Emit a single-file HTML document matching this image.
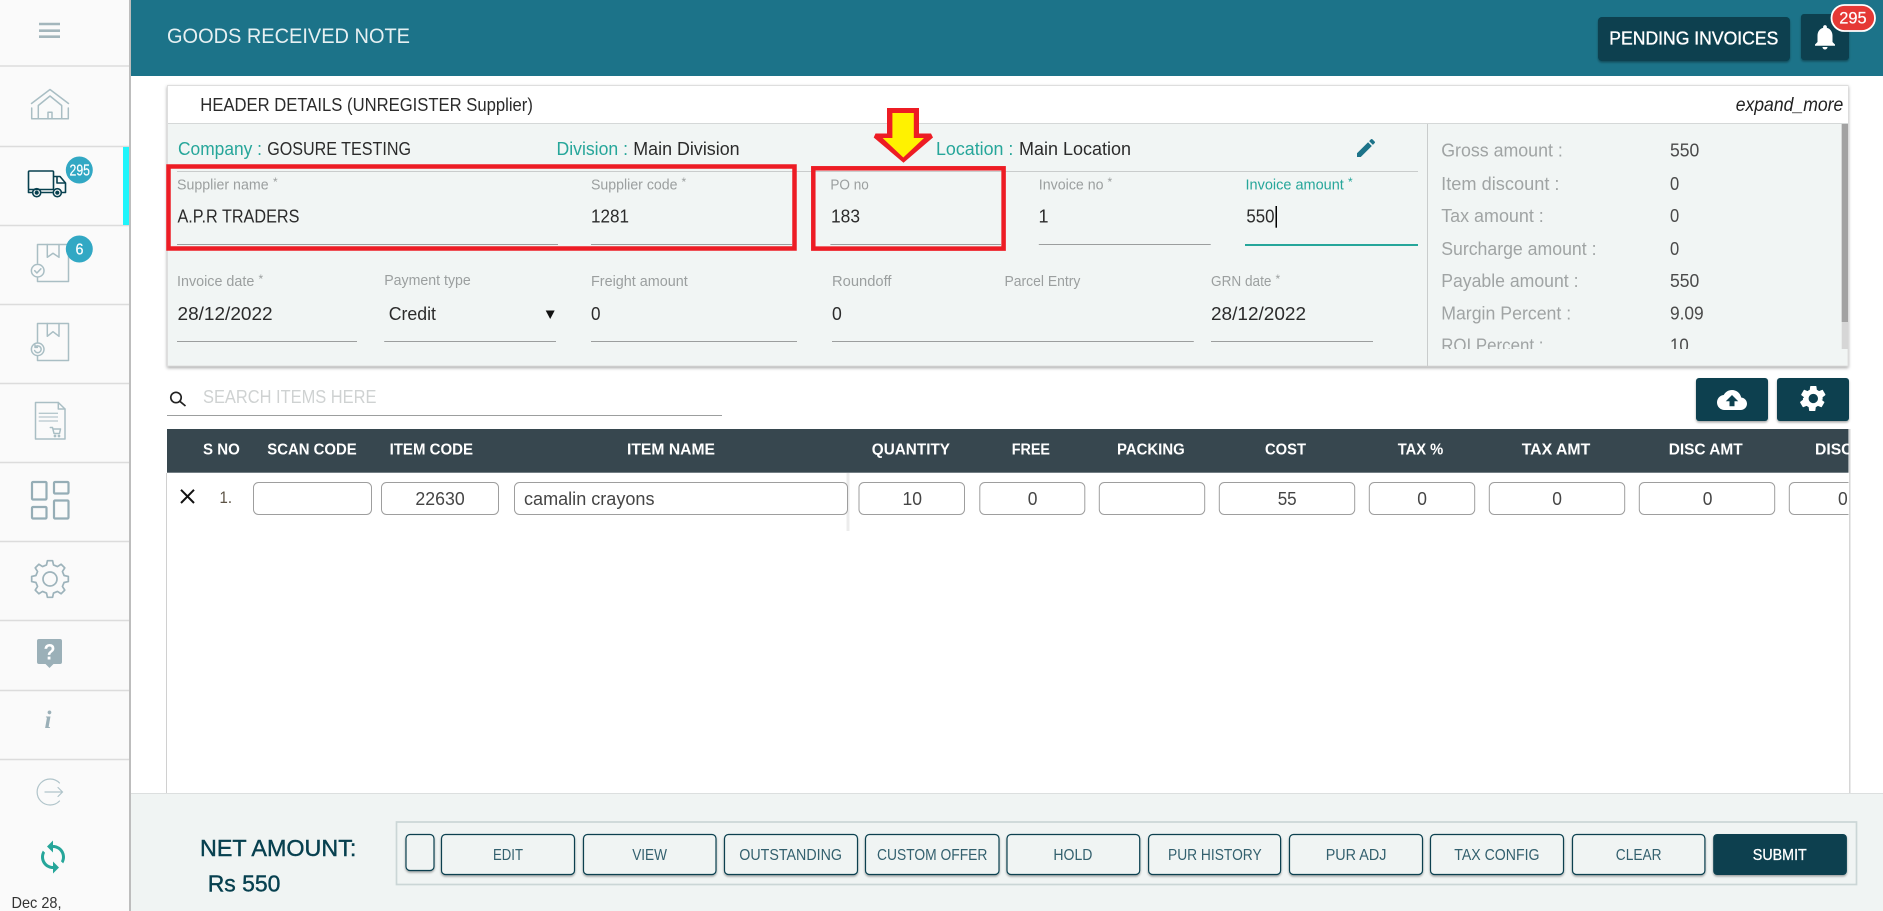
<!DOCTYPE html>
<html lang="en">
<head>
<meta charset="utf-8">
<title>Goods Received Note</title>
<style>
html,body{margin:0;padding:0;background:#fff;width:1883px;height:911px;overflow:hidden}
svg{display:block}
text{font-family:"Liberation Sans",Arial,sans-serif;white-space:pre}
.lab{font-size:15px;fill:#9b9f9f}
.star{font-size:12px;fill:#9b9f9f}
.val{font-size:18px;fill:#2b2b2b}
.top{font-size:18px;fill:#2b2b2b}
.sl{font-size:18px;fill:#a0a4a4}
.sv{font-size:18px;fill:#4a4a4a}
.th{font-size:16px;font-weight:700;fill:#fff}
.td{font-size:18px;fill:#454545}
.btn{font-size:15.500px;fill:#33606e}
.teal{fill:#26a69a}
.ln{stroke:#9c9e9e;stroke-width:1}
.cell{fill:#fff;stroke:#9e9e9e;stroke-width:1}
.fb{fill:#f0f4f3;stroke:#07404f;stroke-width:1.200}
.sep{stroke:#dcdcdc;stroke-width:1.500}
.ic{fill:none;stroke:#a9bec4;stroke-width:1.500;stroke-linejoin:round;stroke-linecap:round}
.ic2{fill:none;stroke:#95adb6;stroke-width:2.200;stroke-linejoin:round}
</style>
</head>
<body>
<svg xmlns="http://www.w3.org/2000/svg" width="1883" height="911" viewBox="0 0 1883 911">
<defs>
<filter id="sh" x="-5%" y="-5%" width="110%" height="115%"><feDropShadow dx="0" dy="1.500" stdDeviation="1.500" flood-color="#000" flood-opacity=".35"/></filter>
<filter id="sb" x="-10%" y="-10%" width="120%" height="130%"><feDropShadow dx="0" dy="1.500" stdDeviation="1" flood-color="#000" flood-opacity=".35"/></filter>
<clipPath id="roi"><rect x="1430" y="124" width="410" height="225"/></clipPath>
<clipPath id="tb"><rect x="167" y="429" width="1681.500" height="120"/></clipPath>
</defs>

<!-- Sidebar -->
<rect x="0" y="0" width="129" height="911" fill="#fafafa"/>
<rect x="129" y="0" width="2" height="911" fill="#bdbdbd"/>
<g class="sep">
<line x1="0" x2="129" y1="66" y2="66"/><line x1="0" x2="129" y1="146.500" y2="146.500"/><line x1="0" x2="129" y1="225.500" y2="225.500"/>
<line x1="0" x2="129" y1="304.500" y2="304.500"/><line x1="0" x2="129" y1="383.500" y2="383.500"/><line x1="0" x2="129" y1="462.500" y2="462.500"/>
<line x1="0" x2="129" y1="541.500" y2="541.500"/><line x1="0" x2="129" y1="620.500" y2="620.500"/><line x1="0" x2="129" y1="690.500" y2="690.500"/><line x1="0" x2="129" y1="759.500" y2="759.500"/>
</g>
<rect x="123" y="147" width="6" height="78" fill="#1ff5fb"/>

<!-- hamburger -->
<g stroke="#a3b6bc" stroke-width="2.600"><line x1="39" x2="60" y1="24" y2="24"/><line x1="39" x2="60" y1="30.700" y2="30.700"/><line x1="39" x2="60" y1="36.700" y2="36.700"/></g>

<!-- home -->
<g class="ic">
<path d="M31.500 103.500 50 89.500 68.500 103.500"/>
<path d="M38.300 118.500V105.500L50 96 61.700 105.500V118.500"/>
<path d="M31.700 108V118.700H68.300V108"/>
<path d="M48 118.500V112.300H52V118.500"/>
</g>

<!-- truck -->
<g fill="none" stroke="#07404f" stroke-width="1.600" stroke-linejoin="round">
<rect x="28.500" y="171" width="25" height="18.500" rx="1"/>
<path d="M53.500 176.500H60L65.500 183V192.500H62"/>
<path d="M57 177V183H65"/>
<path d="M28.500 189.500V192.500H32M41.500 192.500H52.500"/>
<circle cx="36.700" cy="192.700" r="4"/><circle cx="57.300" cy="192.700" r="4"/>
<circle cx="36.700" cy="192.700" r="1.300" fill="#07404f"/><circle cx="57.300" cy="192.700" r="1.300" fill="#07404f"/>
</g>
<circle cx="79.300" cy="170" r="13.500" fill="#32a8c4"/>
<text x="69.500" y="175.500" font-size="16" fill="#fff" stroke="#fff" stroke-width=".2" textLength="20.500" lengthAdjust="spacingAndGlyphs">295</text>

<!-- box check -->
<g class="ic" stroke-width="1.300">
<path d="M37.500 263V244.500H68.500V281.500H37.500V278"/>
<path d="M47.300 244.500V257.300L53 253.300 59 257.300V244.500"/>
<circle cx="37.700" cy="270.700" r="6.300" fill="#fafafa"/>
<path d="M34.700 270.700 36.900 273 40.900 268.800"/>
</g>
<circle cx="79.300" cy="249" r="13.500" fill="#32a8c4"/>
<text x="75.500" y="254.500" font-size="16" fill="#fff" stroke="#fff" stroke-width=".2" textLength="8" lengthAdjust="spacingAndGlyphs">6</text>

<!-- box undo -->
<g class="ic" stroke-width="1.300">
<path d="M37.500 342V323.500H68.500V360.500H37.500V356"/>
<path d="M47.300 323.500V336.300L53 331.700 59 336.300V323.500"/>
<circle cx="37.700" cy="349.300" r="6.300" fill="#fafafa"/>
<path d="M35 347.300A3.400 3.400 0 1 1 34.600 350.500M35 345V347.400H37.400"/>
</g>

<!-- doc cart -->
<g class="ic" stroke-width="1.300">
<path d="M58.300 402.500H35.500V439H65V409Z"/>
<path d="M58.300 402.500V409H65"/>
<path d="M50.300 427.500H52.500L54 433.500H59.500L60.500 429H53" />
<circle cx="55" cy="436" r=".6"/><circle cx="59" cy="436" r=".6"/>
</g>
<g stroke="#b6c8cd" stroke-width="1.300"><line x1="38.700" x2="58" y1="413.300" y2="413.300"/><line x1="38.700" x2="58" y1="417" y2="417"/><line x1="38.700" x2="58" y1="421" y2="421"/></g>

<!-- tiles -->
<g class="ic2">
<rect x="32" y="482" width="14.500" height="17.500" rx="1"/>
<rect x="54" y="482" width="14.500" height="11.500" rx="1"/>
<rect x="32" y="507" width="14.500" height="11.500" rx="1"/>
<rect x="54" y="500.500" width="14.500" height="18" rx="1"/>
</g>

<!-- gear outline -->
<g transform="translate(50 579)" fill="none" stroke="#9db3bb" stroke-width="1.700" stroke-linejoin="round">
<path d="M-3.510-14.070-2.570-18.320 2.570-18.320 3.510-14.070 7.470-12.430 11.130-14.770 14.770-11.130 12.430-7.470 14.070-3.510 18.320-2.570 18.320 2.570 14.070 3.510 12.430 7.470 14.770 11.130 11.130 14.770 7.470 12.430 3.510 14.070 2.570 18.320-2.570 18.320-3.510 14.070-7.470 12.430-11.130 14.770-14.770 11.130-12.430 7.470-14.070 3.510-18.320 2.570-18.320-2.570-14.070-3.510-12.430-7.470-14.770-11.130-11.130-14.770-7.470-12.430Z"/>
<circle r="7"/>
</g>

<!-- help -->
<path d="M39 639H60a2 2 0 0 1 2 2V662a2 2 0 0 1-2 2H53.500L49.500 668 45.500 664H39a2 2 0 0 1-2-2V641a2 2 0 0 1 2-2Z" fill="#9bb0b8"/>
<text x="43.500" y="659.500" font-size="22" font-weight="700" fill="#fff" textLength="12" lengthAdjust="spacingAndGlyphs">?</text>

<!-- info -->
<text x="44.500" y="728" font-size="25" font-weight="700" font-style="italic" fill="#9bb0b8" style="font-family:'Liberation Serif',serif">i</text>

<!-- logout -->
<g fill="none" stroke="#b0c4ca" stroke-width="1.200" stroke-linecap="round">
<path d="M59.500 783A13 13 0 1 0 59.500 801"/>
<path d="M45 792H62.500M58 787.500 62.500 792 58 796.500"/>
</g>

<!-- sync -->
<path transform="translate(35 839) scale(1.500)" fill="#26a69a" d="M12 4V1L8 5l4 4V6c3.310 0 6 2.690 6 6 0 1.010-.25 1.970-.7 2.800l1.460 1.460C19.540 15.030 20 13.570 20 12c0-4.420-3.580-8-8-8zm0 14c-3.310 0-6-2.690-6-6 0-1.010.25-1.970.7-2.800L5.240 7.740C4.460 8.970 4 10.430 4 12c0 4.420 3.580 8 8 8v3l4-4-4-4v3z"/>
<text x="11.500" y="908" font-size="16" fill="#333" textLength="50" lengthAdjust="spacingAndGlyphs">Dec 28,</text>

<!-- Top bar -->
<rect x="131" y="0" width="1752" height="76" fill="#1c7389"/>
<text x="167" y="43" font-size="21" fill="#e6f0f2" textLength="243" lengthAdjust="spacingAndGlyphs">GOODS RECEIVED NOTE</text>
<rect x="1598" y="17" width="192" height="44" rx="4" fill="#07404f" filter="url(#sb)"/>
<text x="1609.300" y="44.500" font-size="18" fill="#fff" stroke="#fff" stroke-width=".35" textLength="169" lengthAdjust="spacingAndGlyphs">PENDING INVOICES</text>
<rect x="1801" y="14" width="48" height="46" rx="3" fill="#07404f" filter="url(#sb)"/>
<path transform="translate(1810 22) scale(1.250)" fill="#fff" d="M12 22c1.100 0 2-.9 2-2h-4c0 1.100.89 2 2 2zm6-6v-5c0-3.070-1.640-5.640-4.500-6.320V4c0-.83-.67-1.500-1.500-1.500s-1.500.67-1.500 1.500v.68C7.630 5.360 6 7.920 6 11v5l-2 2v1h16v-1l-2-2z"/>
<rect x="1831.500" y="5" width="43.500" height="26" rx="13" fill="#e53935" stroke="#fff" stroke-width="1.800"/>
<text x="1839.300" y="23.500" font-size="17" fill="#fff" stroke="#fff" stroke-width=".2" textLength="27.400" lengthAdjust="spacingAndGlyphs">295</text>

<!-- Header details panel -->
<rect x="167.500" y="85.500" width="1680.500" height="280.500" fill="#f1f5f4" stroke="#dedede" stroke-width="1" filter="url(#sh)"/>
<rect x="168" y="86" width="1680" height="37" fill="#fff"/>
<line x1="168" x2="1848" y1="123.500" y2="123.500" stroke="#d5d8d8" stroke-width="1"/>
<text x="200.300" y="111" class="top" textLength="332.600" lengthAdjust="spacingAndGlyphs">HEADER DETAILS (UNREGISTER Supplier)</text>
<text x="1735.700" y="111" font-size="19" font-style="italic" fill="#222" textLength="107.600" lengthAdjust="spacingAndGlyphs">expand_more</text>

<text x="178" y="155" class="top teal" textLength="84" lengthAdjust="spacingAndGlyphs">Company :</text>
<text x="267.200" y="155" class="top" textLength="143.800" lengthAdjust="spacingAndGlyphs">GOSURE TESTING</text>
<text x="556.500" y="155" class="top teal" textLength="71.500" lengthAdjust="spacingAndGlyphs">Division :</text>
<text x="633.300" y="155" class="top" textLength="106.300" lengthAdjust="spacingAndGlyphs">Main Division</text>
<text x="936" y="155" class="top teal" textLength="77.400" lengthAdjust="spacingAndGlyphs">Location :</text>
<text x="1019" y="155" class="top" textLength="112" lengthAdjust="spacingAndGlyphs">Main Location</text>
<path transform="translate(1354 136)" fill="#1c7389" d="M3 17.250V21h3.750L17.810 9.940l-3.750-3.750L3 17.250zM20.710 7.040c.39-.39.39-1.020 0-1.410l-2.340-2.340c-.39-.39-1.020-.39-1.410 0l-1.830 1.830 3.750 3.750 1.830-1.830z"/>
<line x1="177" x2="1418" y1="171.500" y2="171.500" stroke="#c9cccc" stroke-width="1"/>

<!-- row 1 -->
<text x="177" y="189.500" class="lab" textLength="91.600" lengthAdjust="spacingAndGlyphs">Supplier name</text><text x="273" y="186" class="star">*</text>
<text x="591" y="189.500" class="lab" textLength="86.500" lengthAdjust="spacingAndGlyphs">Supplier code</text><text x="681.500" y="186" class="star">*</text>
<text x="830.400" y="189.500" class="lab" textLength="38.400" lengthAdjust="spacingAndGlyphs">PO no</text>
<text x="1038.800" y="189.500" class="lab" textLength="64.800" lengthAdjust="spacingAndGlyphs">Invoice no</text><text x="1107.500" y="186" class="star">*</text>
<text x="1245.500" y="189.500" class="lab teal" textLength="98.300" lengthAdjust="spacingAndGlyphs">Invoice amount</text><text x="1348" y="186" class="star teal">*</text>

<text x="177.500" y="222.700" class="val" textLength="121.900" lengthAdjust="spacingAndGlyphs">A.P.R TRADERS</text>
<text x="591" y="222.700" class="val" textLength="38" lengthAdjust="spacingAndGlyphs">1281</text>
<text x="831" y="222.700" class="val" textLength="29" lengthAdjust="spacingAndGlyphs">183</text>
<text x="1038.500" y="222.700" class="val">1</text>
<text x="1246.400" y="222.700" class="val" textLength="28.100" lengthAdjust="spacingAndGlyphs">550</text>
<rect x="1275.500" y="206" width="1.500" height="21.700" fill="#000"/>

<line class="ln" x1="177" x2="558" y1="244.500" y2="244.500"/>
<line class="ln" x1="591" x2="792" y1="244.500" y2="244.500"/>
<line class="ln" x1="830.400" x2="1001" y1="244.500" y2="244.500"/>
<line class="ln" x1="1038.800" x2="1210.700" y1="244.500" y2="244.500"/>
<line x1="1245" x2="1418" y1="245" y2="245" stroke="#26a69a" stroke-width="2"/>

<!-- row 2 -->
<text x="177" y="286" class="lab" textLength="77.300" lengthAdjust="spacingAndGlyphs">Invoice date</text><text x="258.500" y="283" class="star">*</text>
<text x="384.200" y="285" class="lab" textLength="86.600" lengthAdjust="spacingAndGlyphs">Payment type</text>
<text x="591" y="286" class="lab" textLength="96.800" lengthAdjust="spacingAndGlyphs">Freight amount</text>
<text x="832" y="286" class="lab" textLength="59.500" lengthAdjust="spacingAndGlyphs">Roundoff</text>
<text x="1004.500" y="286" class="lab" textLength="75.900" lengthAdjust="spacingAndGlyphs">Parcel Entry</text>
<text x="1211" y="286" class="lab" textLength="60.400" lengthAdjust="spacingAndGlyphs">GRN date</text><text x="1275.500" y="283" class="star">*</text>

<text x="177.500" y="320" class="val" textLength="95.100" lengthAdjust="spacingAndGlyphs">28/12/2022</text>
<text x="388.700" y="320" class="val" textLength="47.300" lengthAdjust="spacingAndGlyphs">Credit</text>
<path d="M545.700 310.500H554.700L550.200 319Z" fill="#111"/>
<text x="591" y="320" class="val" textLength="9.500" lengthAdjust="spacingAndGlyphs">0</text>
<text x="832" y="320" class="val" textLength="9.800" lengthAdjust="spacingAndGlyphs">0</text>
<text x="1211" y="320" class="val" textLength="95" lengthAdjust="spacingAndGlyphs">28/12/2022</text>

<line class="ln" x1="177" x2="357" y1="341.500" y2="341.500"/>
<line class="ln" x1="384.200" x2="556" y1="341.500" y2="341.500"/>
<line class="ln" x1="591" x2="797" y1="341.500" y2="341.500"/>
<line class="ln" x1="832" x2="1193.800" y1="341.500" y2="341.500"/>
<line class="ln" x1="1211" x2="1373" y1="341.500" y2="341.500"/>

<!-- summary -->
<line x1="1427.500" x2="1427.500" y1="124" y2="366" stroke="#c9cccc" stroke-width="1"/>
<rect x="1841.700" y="124" width="6.300" height="225" fill="#d6d6d6"/>
<rect x="1841.700" y="124" width="6.300" height="198" fill="#a2a2a2"/>
<g clip-path="url(#roi)">
<text x="1441.200" y="156.700" class="sl" textLength="121.600" lengthAdjust="spacingAndGlyphs">Gross amount :</text>
<text x="1441.200" y="190" class="sl" textLength="118.300" lengthAdjust="spacingAndGlyphs">Item discount :</text>
<text x="1441.200" y="222" class="sl" textLength="102.600" lengthAdjust="spacingAndGlyphs">Tax amount :</text>
<text x="1441.200" y="255" class="sl" textLength="155.300" lengthAdjust="spacingAndGlyphs">Surcharge amount :</text>
<text x="1441.200" y="287" class="sl" textLength="137.300" lengthAdjust="spacingAndGlyphs">Payable amount :</text>
<text x="1441.200" y="319.300" class="sl" textLength="130" lengthAdjust="spacingAndGlyphs">Margin Percent :</text>
<text x="1441.200" y="351.500" class="sl" textLength="102.300" lengthAdjust="spacingAndGlyphs">ROI Percent :</text>
<text x="1670" y="156.700" class="sv" textLength="29.300" lengthAdjust="spacingAndGlyphs">550</text>
<text x="1670" y="190" class="sv" textLength="9.200" lengthAdjust="spacingAndGlyphs">0</text>
<text x="1670" y="222" class="sv" textLength="9.200" lengthAdjust="spacingAndGlyphs">0</text>
<text x="1670" y="255" class="sv" textLength="9.200" lengthAdjust="spacingAndGlyphs">0</text>
<text x="1670" y="287" class="sv" textLength="29.300" lengthAdjust="spacingAndGlyphs">550</text>
<text x="1670" y="319.300" class="sv" textLength="33.700" lengthAdjust="spacingAndGlyphs">9.09</text>
<text x="1670" y="351.500" class="sv" textLength="18.700" lengthAdjust="spacingAndGlyphs">10</text>
</g>

<!-- search -->
<g fill="none" stroke="#222" stroke-width="1.700"><circle cx="176" cy="397.500" r="5.200"/><line x1="179.700" y1="401.200" x2="185.500" y2="406"/></g>
<text x="203" y="402.800" font-size="18" fill="#cfd2d2" textLength="173.400" lengthAdjust="spacingAndGlyphs">SEARCH ITEMS HERE</text>
<line class="ln" x1="167" x2="722" y1="415.500" y2="415.500"/>

<rect x="1696" y="378" width="72" height="43" rx="3" fill="#07404f" filter="url(#sb)"/>
<path transform="translate(1717 385) scale(1.250)" fill="#fff" d="M19.350 10.040C18.670 6.590 15.640 4 12 4 9.110 4 6.600 5.640 5.350 8.040 2.340 8.360 0 10.910 0 14c0 3.310 2.690 6 6 6h13c2.760 0 5-2.240 5-5 0-2.640-2.050-4.780-4.650-4.960zM14 13v4h-4v-4H7l5-5 5 5h-3z"/>
<rect x="1777" y="378" width="72" height="43" rx="3" fill="#07404f" filter="url(#sb)"/>
<path transform="translate(1797.700 382.900) scale(1.300)" fill="#fff" d="M19.140 12.940c.04-.3.060-.61.060-.94 0-.32-.02-.64-.07-.94l2.030-1.580c.18-.14.230-.41.120-.61l-1.920-3.320c-.12-.22-.37-.29-.59-.22l-2.390.96c-.5-.38-1.030-.7-1.620-.94l-.36-2.540c-.04-.24-.24-.41-.48-.41h-3.840c-.24 0-.43.170-.47.410l-.36 2.540c-.59.240-1.130.570-1.620.94l-2.390-.96c-.22-.08-.47 0-.59.220L2.740 8.870c-.12.210-.08.470.12.610l2.030 1.580c-.05.300-.9.630-.9.940s.02.640.07.940l-2.030 1.580c-.18.140-.23.410-.12.610l1.920 3.320c.12.220.37.290.59.220l2.390-.96c.5.380 1.030.7 1.620.94l.36 2.540c.05.240.24.410.48.410h3.840c.24 0 .44-.17.47-.41l.36-2.540c.59-.24 1.130-.56 1.620-.94l2.390.96c.22.080.47 0 .59-.22l1.920-3.320c.12-.22.07-.47-.12-.61l-2.010-1.580zM12 15.600c-1.980 0-3.600-1.620-3.600-3.600s1.620-3.600 3.600-3.600 3.600 1.620 3.600 3.600-1.620 3.600-3.600 3.600z"/>

<!-- table -->
<line x1="166.500" x2="166.500" y1="473" y2="793" stroke="#d0d0d0" stroke-width="1"/>
<rect x="1849" y="429" width="1.500" height="364" fill="#d6d6d6"/>
<rect x="167" y="429" width="1681.500" height="43.700" fill="#37474f"/>
<g clip-path="url(#tb)">
<text x="203" y="454.300" class="th" textLength="36.800" lengthAdjust="spacingAndGlyphs">S NO</text>
<text x="267.300" y="454.300" class="th" textLength="89.400" lengthAdjust="spacingAndGlyphs">SCAN CODE</text>
<text x="389.600" y="454.300" class="th" textLength="83.400" lengthAdjust="spacingAndGlyphs">ITEM CODE</text>
<text x="627" y="454.300" class="th" textLength="88" lengthAdjust="spacingAndGlyphs">ITEM NAME</text>
<text x="871.800" y="454.300" class="th" textLength="78.200" lengthAdjust="spacingAndGlyphs">QUANTITY</text>
<text x="1011.700" y="454.300" class="th" textLength="38.300" lengthAdjust="spacingAndGlyphs">FREE</text>
<text x="1117" y="454.300" class="th" textLength="67.700" lengthAdjust="spacingAndGlyphs">PACKING</text>
<text x="1265" y="454.300" class="th" textLength="41" lengthAdjust="spacingAndGlyphs">COST</text>
<text x="1397.700" y="454.300" class="th" textLength="45.600" lengthAdjust="spacingAndGlyphs">TAX %</text>
<text x="1521.700" y="454.300" class="th" textLength="68.600" lengthAdjust="spacingAndGlyphs">TAX AMT</text>
<text x="1668.700" y="454.300" class="th" textLength="74" lengthAdjust="spacingAndGlyphs">DISC AMT</text>
<text x="1815" y="454.300" class="th" textLength="37.500" lengthAdjust="spacingAndGlyphs">DISC</text>

<g stroke="#111" stroke-width="2"><line x1="181" y1="489.800" x2="194" y2="503"/><line x1="194" y1="489.800" x2="181" y2="503"/></g>
<text x="219.500" y="503" font-size="17" fill="#5c5345" textLength="12.500" lengthAdjust="spacingAndGlyphs">1.</text>
<rect x="846.500" y="473" width="3" height="58" fill="#ececec"/>
<rect class="cell" x="253.500" y="482.500" width="118" height="32" rx="5"/>
<rect class="cell" x="381.500" y="482.500" width="117" height="32" rx="5"/>
<rect class="cell" x="514.500" y="482.500" width="333" height="32" rx="5"/>
<rect class="cell" x="859" y="482.500" width="105.500" height="32" rx="5"/>
<rect class="cell" x="979.800" y="482.500" width="105" height="32" rx="5"/>
<rect class="cell" x="1099.300" y="482.500" width="105.400" height="32" rx="5"/>
<rect class="cell" x="1219.300" y="482.500" width="135.400" height="32" rx="5"/>
<rect class="cell" x="1369.300" y="482.500" width="105.400" height="32" rx="5"/>
<rect class="cell" x="1489.300" y="482.500" width="135.400" height="32" rx="5"/>
<rect class="cell" x="1639.300" y="482.500" width="135.400" height="32" rx="5"/>
<rect class="cell" x="1789.300" y="482.500" width="105" height="32" rx="5"/>
<text x="415.400" y="505" class="td" textLength="49.300" lengthAdjust="spacingAndGlyphs">22630</text>
<text x="524" y="505" class="td" textLength="130.500" lengthAdjust="spacingAndGlyphs">camalin crayons</text>
<text x="902.500" y="505" class="td" textLength="19.500" lengthAdjust="spacingAndGlyphs">10</text>
<text x="1027.700" y="505" class="td" textLength="9.700" lengthAdjust="spacingAndGlyphs">0</text>
<text x="1277.700" y="505" class="td" textLength="19" lengthAdjust="spacingAndGlyphs">55</text>
<text x="1417.300" y="505" class="td" textLength="9.700" lengthAdjust="spacingAndGlyphs">0</text>
<text x="1552.300" y="505" class="td" textLength="9.700" lengthAdjust="spacingAndGlyphs">0</text>
<text x="1702.700" y="505" class="td" textLength="9.700" lengthAdjust="spacingAndGlyphs">0</text>
<text x="1838" y="505" class="td" textLength="9.700" lengthAdjust="spacingAndGlyphs">0</text>
</g>

<!-- footer -->
<rect x="131" y="793" width="1752" height="118" fill="#f0f4f3"/>
<line x1="131" x2="1883" y1="793.500" y2="793.500" stroke="#dcdfdf" stroke-width="1"/>
<text x="200" y="856" font-size="23" fill="#07404f" stroke="#07404f" stroke-width=".4" textLength="156.400" lengthAdjust="spacingAndGlyphs">NET AMOUNT:</text>
<text x="207.700" y="891.700" font-size="23" fill="#07404f" stroke="#07404f" stroke-width=".4" textLength="72.700" lengthAdjust="spacingAndGlyphs">Rs 550</text>
<rect x="396.500" y="822" width="1460" height="62.500" fill="#f0f4f3" stroke="#cbd6d6" stroke-width="1.700"/>

<rect class="fb" x="406" y="834.500" width="28" height="36" rx="4" filter="url(#sb)"/>
<rect class="fb" x="441.500" y="834.500" width="133" height="40" rx="4" filter="url(#sb)"/>
<rect class="fb" x="583.500" y="834.500" width="132.500" height="40" rx="4" filter="url(#sb)"/>
<rect class="fb" x="724.500" y="834.500" width="133" height="40" rx="4" filter="url(#sb)"/>
<rect class="fb" x="865.500" y="834.500" width="133.500" height="40" rx="4" filter="url(#sb)"/>
<rect class="fb" x="1007" y="834.500" width="132.700" height="40" rx="4" filter="url(#sb)"/>
<rect class="fb" x="1148.600" y="834.500" width="132" height="40" rx="4" filter="url(#sb)"/>
<rect class="fb" x="1289.500" y="834.500" width="133" height="40" rx="4" filter="url(#sb)"/>
<rect class="fb" x="1430.500" y="834.500" width="133" height="40" rx="4" filter="url(#sb)"/>
<rect class="fb" x="1572.500" y="834.500" width="132.400" height="40" rx="4" filter="url(#sb)"/>
<rect x="1713.200" y="834" width="133.700" height="41" rx="4" fill="#07404f" filter="url(#sb)"/>

<text x="493" y="860" class="btn" textLength="30" lengthAdjust="spacingAndGlyphs">EDIT</text>
<text x="632.200" y="860" class="btn" textLength="34.800" lengthAdjust="spacingAndGlyphs">VIEW</text>
<text x="739.300" y="860" class="btn" textLength="102.700" lengthAdjust="spacingAndGlyphs">OUTSTANDING</text>
<text x="877" y="860" class="btn" textLength="110.400" lengthAdjust="spacingAndGlyphs">CUSTOM OFFER</text>
<text x="1053.400" y="860" class="btn" textLength="39" lengthAdjust="spacingAndGlyphs">HOLD</text>
<text x="1168" y="860" class="btn" textLength="93.700" lengthAdjust="spacingAndGlyphs">PUR HISTORY</text>
<text x="1325.700" y="860" class="btn" textLength="60.700" lengthAdjust="spacingAndGlyphs">PUR ADJ</text>
<text x="1454.300" y="860" class="btn" textLength="85.200" lengthAdjust="spacingAndGlyphs">TAX CONFIG</text>
<text x="1615.800" y="860" class="btn" textLength="45.700" lengthAdjust="spacingAndGlyphs">CLEAR</text>
<text x="1752.800" y="860" font-size="15.500" fill="#fff" stroke="#fff" stroke-width=".3" textLength="54" lengthAdjust="spacingAndGlyphs">SUBMIT</text>

<!-- annotations -->
<rect x="168.500" y="166.500" width="626" height="82" fill="none" stroke="#ed1c24" stroke-width="4.500"/>
<rect x="813.300" y="168.300" width="190.300" height="80.300" fill="none" stroke="#ed1c24" stroke-width="4.500"/>
<path d="M887 108H919V133.500H931L933 137.500 903.500 162.700 873.700 137.500 875.500 133.500H887Z" fill="#ed1c24"/>
<path d="M892.400 113H913.800V138H924L903.300 157.500 882.600 138H892.400Z" fill="#fff200"/>
</svg>
</body>
</html>
